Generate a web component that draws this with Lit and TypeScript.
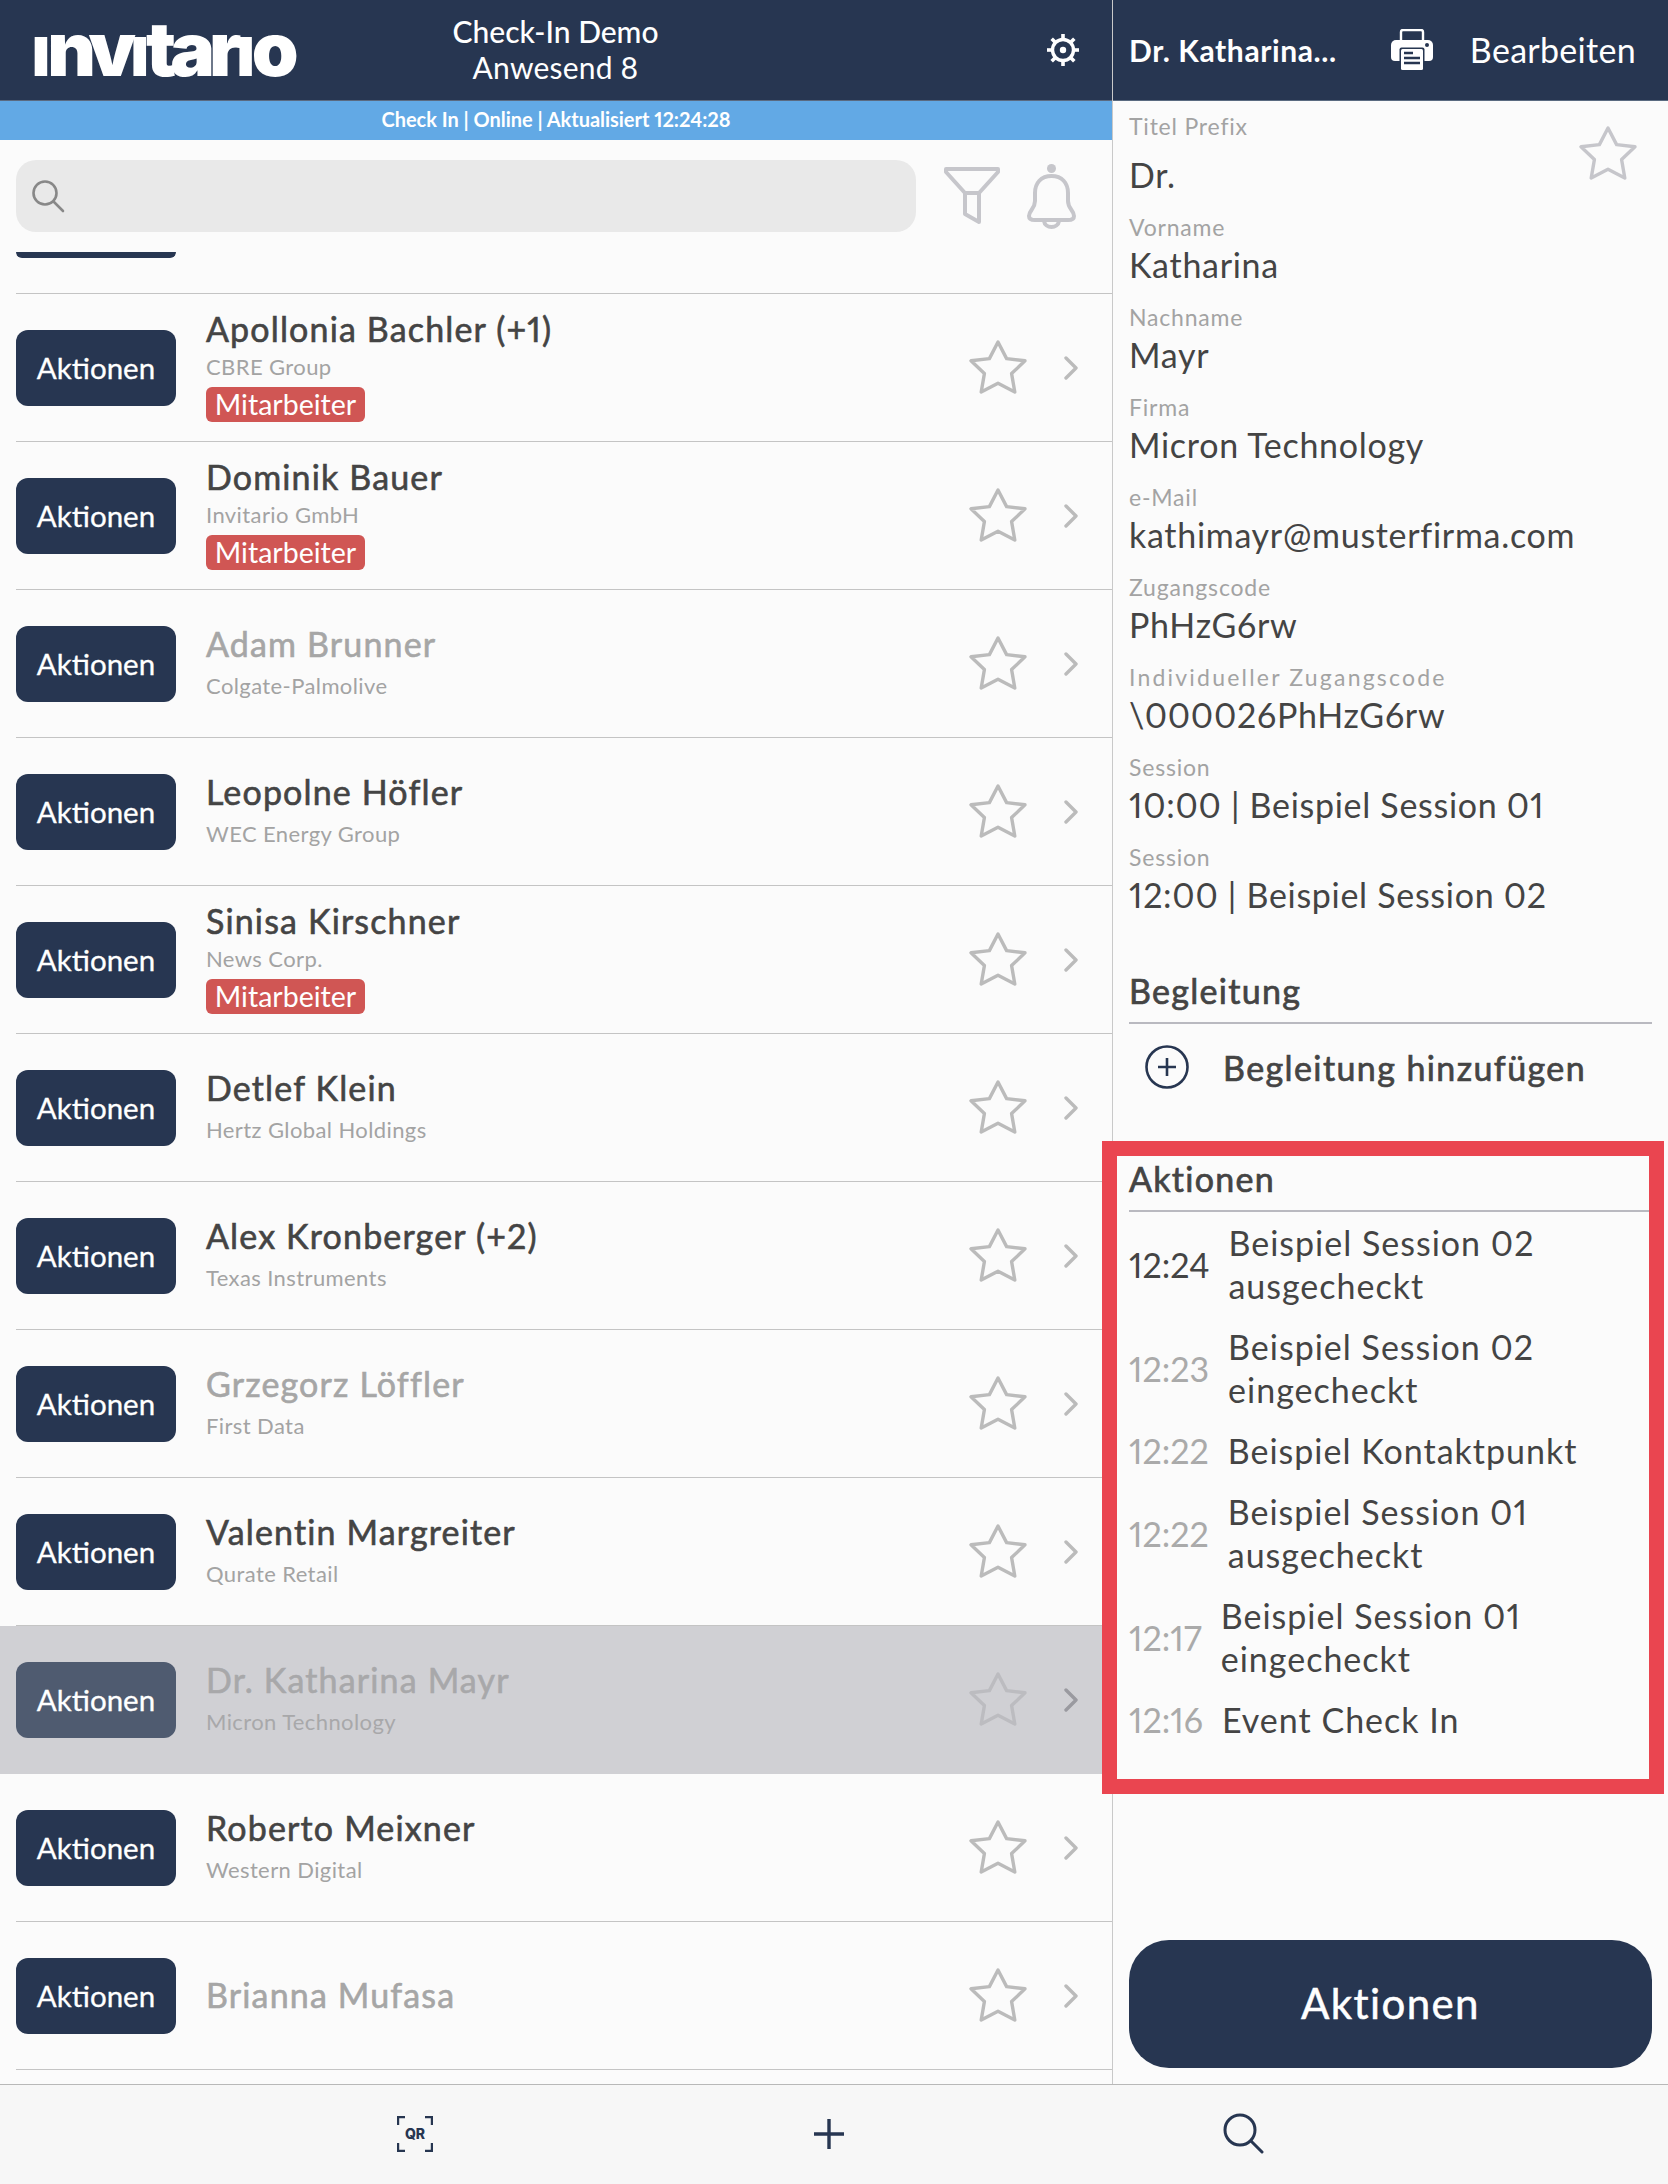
import { LitElement, html, css, svg } from "lit";
import { customElement } from "lit/decorators.js";

type Person = { name: string; co?: string; tag?: boolean; dim?: boolean; sel?: boolean };

const people: Person[] = [
  { name: "Apollonia Bachler (+1)", co: "CBRE Group", tag: true },
  { name: "Dominik Bauer", co: "Invitario GmbH", tag: true },
  { name: "Adam Brunner", co: "Colgate-Palmolive", dim: true },
  { name: "Leopolne Höfler", co: "WEC Energy Group" },
  { name: "Sinisa Kirschner", co: "News Corp.", tag: true },
  { name: "Detlef Klein", co: "Hertz Global Holdings" },
  { name: "Alex Kronberger (+2)", co: "Texas Instruments" },
  { name: "Grzegorz Löffler", co: "First Data", dim: true },
  { name: "Valentin Margreiter", co: "Qurate Retail" },
  { name: "Dr. Katharina Mayr", co: "Micron Technology", dim: true, sel: true },
  { name: "Roberto Meixner", co: "Western Digital" },
  { name: "Brianna Mufasa", dim: true },
];

const fields = [
  ["Vorname", "Katharina"],
  ["Nachname", "Mayr"],
  ["Firma", "Micron Technology"],
  ["e-Mail", "kathimayr@musterfirma.com"],
  ["Zugangscode", "PhHzG6rw"],
  ["Individueller Zugangscode", "\\000026PhHzG6rw", "wide"],
  ["Session", "10:00 | Beispiel Session 01"],
  ["Session", "12:00 | Beispiel Session 02"],
];

const log = [
  ["12:24", "Beispiel Session 02\nausgecheckt", true],
  ["12:23", "Beispiel Session 02\neingecheckt"],
  ["12:22", "Beispiel Kontaktpunkt"],
  ["12:22", "Beispiel Session 01\nausgecheckt"],
  ["12:17", "Beispiel Session 01\neingecheckt"],
  ["12:16", "Event Check In"],
] as [string, string, boolean?][];

const star = svg`<svg class="star" width="58" height="54" viewBox="0 0 58 54" fill="none" stroke="currentColor" stroke-width="3.4" stroke-linejoin="round"><path d="M29 2 37.6 18.6 56 20.8 42.6 33.6 45.8 52 29 43.2 12.2 52 15.4 33.6 2 20.8 20.4 18.6Z"/></svg>`;

const teeth = [0, 45, 90, 135, 180, 225, 270, 315];

@customElement("app-root")
export class AppRoot extends LitElement {
  static styles = css`
    :host { display: block; width: 1668px; height: 2184px; position: relative; overflow: hidden; background: #fbfbfb; font-family: "Lato", "Open Sans", sans-serif; color: #444; font-variant-numeric: proportional-nums; }
    * { box-sizing: border-box; }
    .main { display: flex; height: 2084px; }
    .left { width: 1112px; flex: none; display: flex; flex-direction: column; }
    .right { flex: 1; display: flex; flex-direction: column; border-left: 1px solid #c9c9c9; min-width: 0; }
    .head { height: 101px; flex: none; background: #273651; border-bottom: 1px solid #5a6a80; color: #fff; }
    .lhead { display: grid; grid-template-columns: 1fr auto 1fr; align-items: center; padding: 0 32px 0 31px; }
    .logo { font-family: "Inter", sans-serif; font-weight: 900; font-size: 75px; line-height: 100px; letter-spacing: -6px; white-space: nowrap; height: 100px; margin-top: -2px; }
    .logo .i { display: inline-block; clip-path: inset(38% 0 0 0); }
    .title { text-align: center; font-size: 30px; line-height: 36px; margin-top: -3px; }
    .title b { display: block; font-weight: 500; letter-spacing: 0; }
    .title span { display: block; font-weight: 400; letter-spacing: .2px; }
    .gear { justify-self: end; display: block; }
    .status { height: 39px; flex: none; background: #62a9e5; color: #fff; text-align: center; font-size: 20px; font-weight: 700; line-height: 37px; letter-spacing: -.03px; }
    .tools { height: 112px; flex: none; display: flex; align-items: center; padding-left: 16px; }
    .search { width: 900px; height: 72px; background: #e9e9e9; border-radius: 20px; display: flex; align-items: center; padding-left: 15px; color: #888; }
    .filter { margin-left: 28px; }
    .bell { margin-left: 26px; }
    .list { flex: 1; overflow: hidden; }
    .peek { height: 42px; margin-left: 16px; border-bottom: 1px solid #c4c4c4; }
    .peek i { display: block; width: 160px; height: 6px; background: #273651; border-radius: 0 0 12px 12px; }
    .row { height: 148px; display: flex; align-items: center; position: relative; padding: 0 34px 2px 16px; color: #bbb; }
    .row::after { content: ""; position: absolute; left: 16px; right: 0; bottom: 0; height: 1px; background: #c4c4c4; }
    .row .btn { margin-top: 2px; padding-bottom: 2px; }
    .btn { width: 160px; height: 76px; flex: none; background: #273651; color: #fff; border-radius: 12px; display: flex; align-items: center; justify-content: center; font-size: 29.5px; -webkit-text-stroke: .3px #fff; }
    .txt { flex: 1; margin: 0 0 0 30px; min-width: 0; }
    .tagged .txt { margin-top: -3px; }
    .name { font-size: 34px; line-height: 40px; color: #444; letter-spacing: 1.15px; white-space: nowrap; -webkit-text-stroke: .6px currentColor; }
    .co { font-size: 22px; line-height: 34px; margin-top: 5px; color: #a3a3a3; letter-spacing: .4px; }
    .tagged .co { margin-top: 1px; }
    .tag { display: block; margin-top: 3px; height: 35px; width: 159px; background: #d05654; color: #fff; border-radius: 6px; font-size: 28.5px; line-height: 35px; text-align: center; }
    .dim .name { color: #a6a6a6; }
    .chev { margin: 2px 0 0 37px; display: block; flex: none; }
    .sel { background: #d0d0d4; color: #bcbcc0; }
    .sel::after { display: none; }
    .sel .btn { background: #4f5b70; }
    .sel .name, .sel .co { color: #a8a8aa; }
    .sel .chev { color: #9a9aa0; }
    .rhead { display: flex; align-items: center; padding: 0 32px 0 16px; }
    .rname { font-size: 30px; font-weight: 700; letter-spacing: .6px; margin-right: auto; }
    .edit { font-size: 34px; margin: -2px 0 0 37px; letter-spacing: .3px; }
    .pane { flex: 1; display: flex; flex-direction: column; padding: 11px 16px 16px; min-height: 0; }
    .first { display: flex; justify-content: space-between; margin-bottom: 17px; color: #c6c6cb; }
    .first .star { margin: 14px 15px 0 0; }
    .first .val { margin-top: 14px; }
    .field { margin-bottom: 17px; }
    .lab { font-size: 23px; line-height: 28px; color: #a3a3a3; letter-spacing: .8px; height: 28px; }
    .lab.wide { letter-spacing: 2.2px; }
    .val { font-size: 34px; line-height: 42px; margin-top: 3px; color: #444; letter-spacing: .7px; white-space: nowrap; }
    .sec { font-size: 34px; line-height: 42px; color: #444; padding-bottom: 10px; border-bottom: 2px solid #b9b9c0; letter-spacing: 1.3px; -webkit-text-stroke: .7px currentColor; }
    .begl { margin-top: 37px; }
    .add { height: 88px; display: flex; align-items: center; padding: 0 0 2px 16px; font-size: 34px; gap: 34px; letter-spacing: 1.4px; -webkit-text-stroke: .7px currentColor; }
    .add svg { flex: none; }
    .akt { margin-top: 46px; padding-bottom: 10px; }
    .item { display: flex; align-items: center; gap: 19px; padding: 9px 0; }
    .time { font-size: 34px; color: #aaa; letter-spacing: 0; }
    .now { color: #444; }
    .what { font-size: 34px; line-height: 43px; white-space: pre-line; letter-spacing: 1px; color: #444; }
    .big { margin-top: auto; height: 128px; padding-bottom: 2px; background: #273651; color: #fff; border-radius: 40px; display: flex; align-items: center; justify-content: center; font-size: 42px; letter-spacing: 1.4px; flex: none; -webkit-text-stroke: .5px #fff; }
    .foot { height: 100px; background: #f7f7f7; border-top: 1px solid #b8b8b8; display: flex; justify-content: center; align-items: center; color: #273651; padding: 0 10px 2px 0; }
    .cell { width: 414px; display: flex; justify-content: center; }
    .qr { position: relative; width: 36px; height: 36px; display: flex; align-items: center; justify-content: center; font-family: "Inter", sans-serif; font-size: 14px; font-weight: 800; }
    .qr svg { position: absolute; inset: 0; }
    .mark { position: absolute; left: 1102px; top: 1141px; width: 562px; height: 653px; border: 15px solid #ea4550; pointer-events: none; }
  `;

  render() {
    return html`
      <div class="main">
        <div class="left">
          <div class="head lhead">
            <div class="logo"><span class="i">i</span>nv<span class="i">i</span>tar<span class="i">i</span>o</div>
            <div class="title"><b>Check-In Demo</b><span>Anwesend 8</span></div>
            <svg class="gear" width="34" height="34" viewBox="0 0 34 34" fill="none" stroke="#fff">
              ${teeth.map((a) => svg`<line x1="17" y1="6" x2="17" y2="1" stroke-width="3.6" transform="rotate(${a} 17 17)"/>`)}
              <circle cx="17" cy="17" r="10.5" stroke-width="3.4"/>
              <circle cx="17" cy="17" r="3.2" fill="#fff" stroke="none"/>
            </svg>
          </div>
          <div class="status">Check In | Online | Aktualisiert 12:24:28</div>
          <div class="tools">
            <div class="search">
              <svg width="34" height="34" viewBox="0 0 34 34" fill="none" stroke="currentColor" stroke-width="2.6" stroke-linecap="round"><circle cx="14" cy="14" r="11.5"/><path d="M22.5 22.5 32 32"/></svg>
            </div>
            <svg class="filter" width="56" height="58" viewBox="0 0 56 58" fill="none" stroke="#c6c6cb" stroke-width="4" stroke-linejoin="round"><path d="M2 2H54V5L35 26V55L21 47V26L2 5Z"/><path d="M21 26H35"/></svg>
            <svg class="bell" width="51" height="66" viewBox="0 0 51 66" fill="none" stroke="#c6c6cb" stroke-width="4"><circle cx="25.500" cy="5.500" r="4.500" fill="#c6c6cb" stroke="none"/><path d="M25.500 13C15 13 9 20 9 30V38C9 46 3 47 3 53 3 56 6 57 9 57H42C45 57 48 56 48 53 48 47 42 46 42 38V30C42 20 36 13 25.500 13Z"/><path d="M18 58C19 66 32 66 33 58"/></svg>
          </div>
          <div class="list">
            <div class="peek"><i></i></div>
            ${people.map((p) => html`
              <div class="row ${p.sel ? "sel" : ""} ${p.dim ? "dim" : ""} ${p.tag ? "tagged" : ""}">
                <div class="btn">Aktionen</div>
                <div class="txt">
                  <div class="name">${p.name}</div>
                  ${p.co ? html`<div class="co">${p.co}</div>` : ""}
                  ${p.tag ? html`<div class="tag">Mitarbeiter</div>` : ""}
                </div>
                ${star}
                <svg class="chev" width="14" height="24" viewBox="0 0 14 24" fill="none" stroke="currentColor" stroke-width="3.4" stroke-linecap="round" stroke-linejoin="round"><path d="M2 2 12 12 2 22"/></svg>
              </div>`)}
          </div>
        </div>
        <div class="right">
          <div class="head rhead">
            <div class="rname">Dr. Katharina...</div>
            <svg width="42" height="42" viewBox="0 0 42 42"><path d="M10 12V3a2 2 0 0 1 2-2h18a2 2 0 0 1 2 2v9" fill="none" stroke="#fff" stroke-width="2.4"/><path d="M5 11H37a5 5 0 0 1 5 5V28a4 4 0 0 1-4 4H4a4 4 0 0 1-4-4V16a5 5 0 0 1 5-5Z" fill="#fff"/><circle cx="36" cy="16" r="2" fill="#273651"/><rect x="8.500" y="18.500" width="25" height="23" rx="2" fill="#273651"/><rect x="10" y="20" width="22" height="21" rx="1.500" fill="#fff"/><path d="M13 24H22M13 29H29M13 34H29" stroke="#273651" stroke-width="2.400"/></svg>
            <div class="edit">Bearbeiten</div>
          </div>
          <div class="pane">
            <div class="first">
              <div><div class="lab">Titel Prefix</div><div class="val">Dr.</div></div>
              ${star}
            </div>
            ${fields.map(([l, v, c]) => html`<div class="field"><div class="lab ${c || ""}">${l}</div><div class="val">${v}</div></div>`)}
            <div class="sec begl">Begleitung</div>
            <div class="add">
              <svg width="44" height="44" viewBox="0 0 44 44" fill="none" stroke="#273651" stroke-width="2.600"><circle cx="22" cy="22" r="20.500"/><path d="M22 13V31M13 22H31"/></svg>
              <span>Begleitung hinzufügen</span>
            </div>
            <div class="sec akt">Aktionen</div>
            <div class="items">
              ${log.map(([t, w, now]) => html`<div class="item"><div class="time ${now ? "now" : ""}">${t}</div><div class="what">${w}</div></div>`)}
            </div>
            <div class="big">Aktionen</div>
          </div>
        </div>
      </div>
      <div class="foot">
        <div class="cell"><div class="qr">
          <svg width="36" height="36" viewBox="0 0 36 36" fill="none" stroke="currentColor" stroke-width="2.400"><path d="M1 9V1H8M28 1H35V9M1 27V35H8M28 35H35V27"/></svg>QR</div></div>
        <div class="cell"><svg width="30" height="30" viewBox="0 0 30 30" stroke="currentColor" stroke-width="3.400"><path d="M15 0V30M0 15H30"/></svg></div>
        <div class="cell"><svg width="41" height="41" viewBox="0 0 41 41" fill="none" stroke="currentColor" stroke-width="3" stroke-linecap="round"><circle cx="17" cy="17" r="15"/><path d="M28 28 39 39"/></svg></div>
      </div>
      <div class="mark"></div>
    `;
  }
}
